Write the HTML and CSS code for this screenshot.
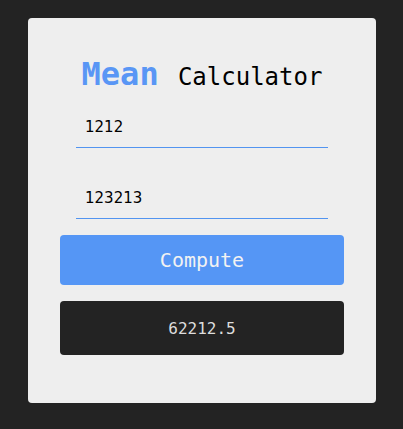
FILE: index.html
```html
<!DOCTYPE html>
<html>
<head>
<meta charset="utf-8">
<link rel="stylesheet" href="styles.css">
</head>
<body>
<div class="card">
  <h1 class="title"><span class="accent">Mean </span>Calculator</h1>
  <input class="field first" type="text" value="1212">
  <input class="field second" type="text" value="123213">
  <button class="compute">Compute</button>
  <div class="result">62212.5</div>
</div>
</body>
</html>
```
FILE: styles.css
```css
html, body {
  margin: 0;
  padding: 0;
  background: #232323;
  height: 100%;
}
body {
  padding-top: 18px;
  box-sizing: border-box;
}
.card {
  width: 348px;
  height: 385px;
  margin-left: 28px;
  box-sizing: border-box;
  background: #eeeeee;
  border-radius: 4px;
  padding: 36px 32px 0;
  display: flex;
  flex-direction: column;
}
.title {
  margin: 0;
  text-align: center;
  font-family: "DejaVu Sans Mono", monospace;
  font-weight: normal;
  font-size: 24px;
  line-height: 40px;
  color: #000;
}
.accent {
  font-size: 32px;
  font-weight: bold;
  color: #5996f5;
}
.field {
  display: block;
  margin: 0 16px;
  width: 252px;
  box-sizing: border-box;
  border: none;
  border-bottom: 1px solid #5294f0;
  background: transparent;
  font-family: "DejaVu Sans", sans-serif;
  font-size: 15px;
  line-height: 20px;
  padding: 8px 9px 10px;
  color: #000;
  outline: none;
}
.first {
  margin-top: 12px;
}
.second {
  margin-top: 32px;
}
.compute {
  margin-top: 16px;
  height: 50px;
  border: none;
  border-radius: 4px;
  background: #5596f5;
  color: #f2f2f2;
  font-family: "DejaVu Sans Mono", monospace;
  font-size: 20px;
}
.result {
  margin-top: 16px;
  height: 54px;
  border-radius: 4px;
  background: #232323;
  color: #dddddd;
  font-family: "DejaVu Sans Mono", monospace;
  font-size: 16px;
  display: flex;
  align-items: center;
  justify-content: center;
}
```
